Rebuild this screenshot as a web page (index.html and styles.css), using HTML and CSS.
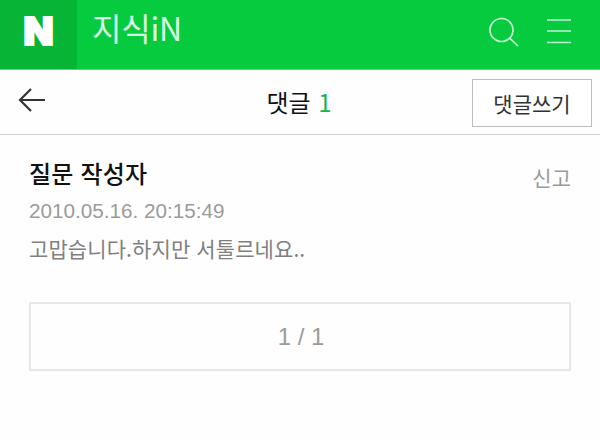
FILE: index.html
```html
<!DOCTYPE html>
<html lang="ko">
<head>
<meta charset="utf-8">
<title>지식iN</title>
<link rel="stylesheet" href="styles.css">
</head>
<body>
<header class="top">
  <div class="brand"><span class="brand-mark">N</span></div>
  <h1 class="service"><span class="service-ko">지식</span><span class="service-en">iN</span></h1>
  <svg class="icon-search" width="32" height="32" viewBox="0 0 32 32"><circle cx="14.5" cy="14" r="11.5"/><path d="M22.7 22.2L31 30"/></svg>
  <svg class="icon-menu" width="24" height="26" viewBox="0 0 24 26"><path d="M0 2H24M0 13H24M0 24.500H24"/></svg>
</header>
<nav class="bar">
  <svg class="icon-back" width="28" height="26" viewBox="0 0 28 26"><path d="M13 2L2 13L13 24M2 13H27"/></svg>
  <h2 class="title">댓글 <span class="count">1</span></h2>
  <button class="write"><span>댓글쓰기</span></button>
</nav>
<main class="content">
  <article class="comment">
    <div class="head">
      <strong class="author">질문 작성자</strong>
      <span class="report">신고</span>
    </div>
    <time class="date">2010.05.16. 20:15:49</time>
    <p class="text">고맙습니다.하지만 서툴르네요..</p>
  </article>
  <div class="pager"><span>1 / 1</span></div>
</main>
</body>
</html>
```
FILE: styles.css
```css
* { box-sizing: border-box; }
body {
  margin: 0;
  background: #fefefe;
  font-family: "Liberation Sans", "Noto Sans CJK KR", sans-serif;
  color: #111;
}
h1, h2, p { margin: 0; }
.top {
  display: flex;
  height: 70px;
  background: #06cb3e;
  border-bottom: 1px solid #5fd583;
}
.brand {
  display: flex;
  justify-content: center;
  width: 77px;
  background: #06b536;
}
.brand-mark {
  font: 900 39px/62px Inter, sans-serif;
  color: #fff;
  -webkit-text-stroke: 2px #fff;
}
.service {
  flex: 1;
  padding-left: 15px;
  font: 400 32px/55px "Noto Sans CJK KR", sans-serif;
  letter-spacing: -0.2px;
  color: #d9fae3;
}
.icon-search, .icon-menu, .icon-back {
  fill: none;
  stroke: #c4f5d2;
  stroke-width: 1.7;
}
.icon-search { margin: 16px 28px 0 0; }
.icon-menu { margin: 18px 29px 0 0; }
.bar {
  display: grid;
  grid-template-columns: 128px 1fr 128px;
  height: 65px;
  padding: 9px 0 0;
  border-bottom: 1px solid #cfcfcf;
}
.icon-back {
  margin: 8px 0 0 18px;
  stroke: #333;
  stroke-width: 2.2;
}
.title {
  margin-left: -2px;
  text-align: center;
  font: 400 24px/46px "Noto Sans CJK KR", sans-serif;
}
.count { margin-left: 1px; color: #12b84a; }
.write {
  width: 120px;
  height: 48px;
  padding: 0;
  border: 1px solid #bdbdbd;
  background: #fff;
  font: 400 21px/46px "Noto Sans CJK KR", sans-serif;
  color: #333;
}
.content { padding: 23px 29px 0; }
.head {
  display: flex;
  justify-content: space-between;
  height: 40px;
}
.author {
  font: 500 24px/30px "Noto Sans CJK KR", sans-serif;
  letter-spacing: 0.2px;
}
.report {
  font: 400 21px/38px "Noto Sans CJK KR", sans-serif;
  color: #9a9a9a;
}
.date {
  display: block;
  font-size: 20.700px;
  line-height: 26px;
  color: #9b9b9b;
}
.text {
  margin-top: 8px;
  font: 400 21px/32px "Noto Sans CJK KR", sans-serif;
  letter-spacing: 0.1px;
  color: #808080;
}
.pager {
  height: 69px;
  margin-top: 38px;
  border: 2px solid #e6e6e6;
  font-size: 24px;
  line-height: 66px;
  text-align: center;
  color: #9b9b9b;
}
.pager span { padding-left: 2px; }
```
